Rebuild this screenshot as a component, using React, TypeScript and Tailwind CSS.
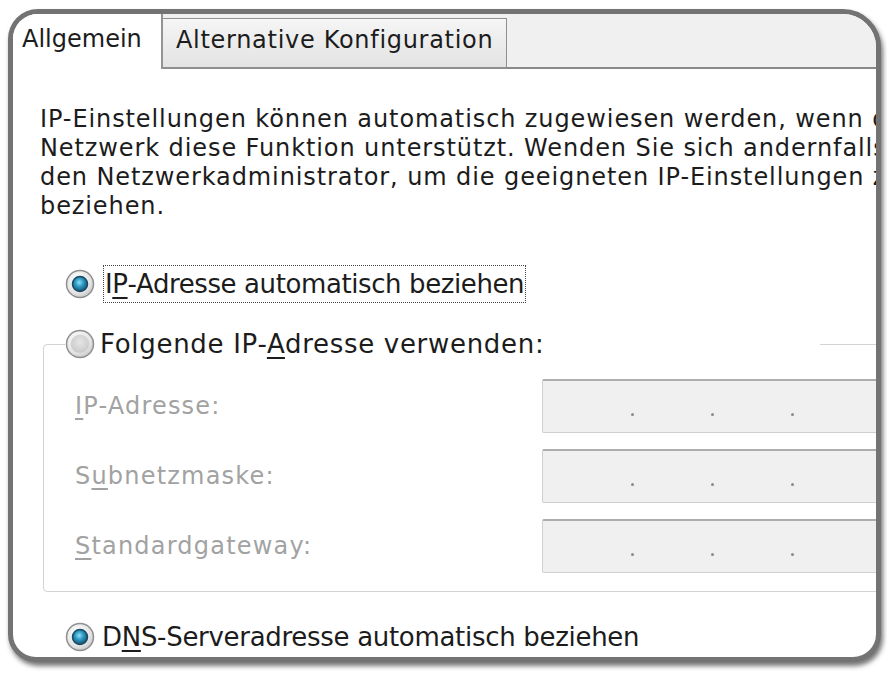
import React from 'react';

function Radio({ checked, id }: { checked: boolean; id: string }) {
  return (
    <svg width="30" height="30" viewBox="0 0 30 30" className="shrink-0">
      <defs>
        <radialGradient id={`${id}-ring`} cx="40%" cy="35%" r="70%">
          <stop offset="0%" stopColor="#ffffff" />
          <stop offset="70%" stopColor="#e4e4e4" />
          <stop offset="100%" stopColor="#c4c4c4" />
        </radialGradient>
        <radialGradient id={`${id}-dot`} cx="45%" cy="40%" r="60%">
          <stop offset="0%" stopColor="#8fe0f8" />
          <stop offset="45%" stopColor="#2f9cc6" />
          <stop offset="100%" stopColor="#174f6e" />
        </radialGradient>
        <radialGradient id={`${id}-off`} cx="50%" cy="40%" r="60%">
          <stop offset="0%" stopColor="#e6e6e6" />
          <stop offset="100%" stopColor="#c9c9c9" />
        </radialGradient>
      </defs>
      <circle cx="15" cy="15" r="13.5" fill={`url(#${id}-ring)`} stroke="#8f9092" strokeWidth="1.5" />
      {checked ? (
        <circle cx="15" cy="15" r="7.5" fill={`url(#${id}-dot)`} stroke="#1b4a63" strokeWidth="1.5" />
      ) : (
        <circle cx="15" cy="15" r="9" fill={`url(#${id}-off)`} stroke="#d4d4d4" strokeWidth="1" />
      )}
    </svg>
  );
}

function IpField() {
  return (
    <div className="w-[400px] h-[54px] shrink-0 bg-[#f0f0f0] border border-[#cfcfcf] border-t-2 border-t-[#adadad] rounded-[2px] flex items-start pt-[32px]">
      <div className="ml-[88px] w-[3px] h-[3px] rounded-full bg-[#8a8a8a]" />
      <div className="ml-[77px] w-[3px] h-[3px] rounded-full bg-[#8a8a8a]" />
      <div className="ml-[77px] w-[3px] h-[3px] rounded-full bg-[#8a8a8a]" />
    </div>
  );
}

function FieldRow({ label }: { label: React.ReactNode }) {
  return (
    <div className="flex items-center h-[54px]">
      <div className="w-[467px] shrink-0 text-[24px] tracking-[1.2px] text-[#a2a2a2] whitespace-nowrap">{label}</div>
      <IpField />
    </div>
  );
}

export default function App() {
  return (
    <div className="w-[887px] h-[678px] overflow-hidden bg-white pt-[9px] pl-[8px] font-['DejaVu_Sans',sans-serif] text-[#1c1c1c]">
      <div className="w-[873px] h-[653px] flex flex-col overflow-hidden bg-white border-[5px] border-[#737373] rounded-tl-[30px] rounded-tr-[38px] rounded-b-[28px] shadow-[2px_4px_5px_rgba(0,0,0,0.55)]">
        {/* tab strip */}
        <div className="flex h-[55px] shrink-0 bg-[#f0f0f0]">
          <div className="w-[150px] shrink-0 bg-white border-r-2 border-[#949494] pl-[9px] pt-[11px] text-[24px] leading-[29px] whitespace-nowrap">
            Allgemein
          </div>
          <div className="mt-[4px] w-[344px] shrink-0 bg-gradient-to-b from-[#f5f5f5] to-[#e3e3e3] border-t border-r border-b-2 border-[#8f8f8f] pl-[13px] pt-[7px] text-[24px] tracking-[0.7px] leading-[29px] whitespace-nowrap">
            Alternative Konfiguration
          </div>
          <div className="flex-1 border-b-2 border-[#8a8a8a]" />
        </div>

        {/* panel */}
        <div className="flex-1 flex flex-col pt-[36px]">
          <div className="pl-[27px] text-[24px] tracking-[0.9px] leading-[29px] whitespace-nowrap">
            <div>IP-Einstellungen können automatisch zugewiesen werden, wenn das</div>
            <div>Netzwerk diese Funktion unterstützt. Wenden Sie sich andernfalls an</div>
            <div>den Netzwerkadministrator, um die geeigneten IP-Einstellungen zu</div>
            <div>beziehen.</div>
          </div>

          <div className="mt-[44px] ml-[52px] h-[38px] flex items-center gap-[8px]">
            <Radio checked id="r1" />
            <span className="border border-dotted border-[#444] px-[1px] h-[38px] flex items-center text-[26px] tracking-[-0.4px] whitespace-nowrap">
              I<span className="underline underline-offset-[4px]">P</span>-Adresse automatisch beziehen
            </span>
          </div>

          <fieldset className="mt-[21px] ml-[30px] w-[900px] border border-[#d2d2d2] rounded-[4px] pt-[15px] pb-[18px]">
            <legend className="ml-[21px] w-[755px] h-[40px] bg-white flex items-center gap-[5px]">
              <Radio checked={false} id="r2" />
              <span className="text-[26px] tracking-[0.7px] whitespace-nowrap">
                Folgende IP-<span className="underline underline-offset-[4px]">A</span>dresse verwenden:
              </span>
            </legend>
            <div className="pl-[31px] flex flex-col gap-[16px]">
              <FieldRow label={<><span className="underline underline-offset-[4px]">I</span>P-Adresse:</>} />
              <FieldRow label={<>S<span className="underline underline-offset-[4px]">u</span>bnetzmaske:</>} />
              <FieldRow label={<><span className="underline underline-offset-[4px]">S</span>tandardgateway:</>} />
            </div>
          </fieldset>

          <div className="mt-[25px] ml-[52px] h-[40px] flex items-center gap-[7px]">
            <Radio checked id="r3" />
            <span className="text-[26px] tracking-[-0.3px] whitespace-nowrap">
              D<span className="underline underline-offset-[4px]">N</span>S-Serveradresse automatisch beziehen
            </span>
          </div>
        </div>
      </div>
    </div>
  );
}
